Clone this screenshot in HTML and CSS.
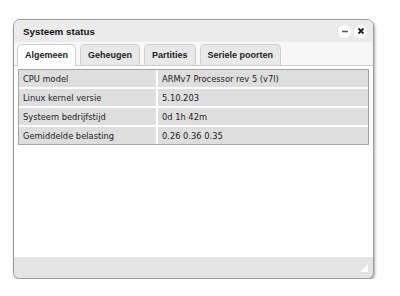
FILE: index.html
```html
<!DOCTYPE html>
<html lang="nl">

<head>
    <meta charset="UTF-8">
    <title>Systeem status</title>
    <link rel="stylesheet" href="styles.css">
</head>

<body>
    <div class="window">
        <div class="titlebar">
            <span class="title">Systeem status</span>
            <div class="win-buttons">
                <span class="win-btn">
                    <svg width="12" height="12" viewBox="0 0 12 12"><path d="M3 6.5h6" stroke="#555" stroke-width="1.6"/></svg>
                </span>
                <span class="win-btn">
                    <svg width="12" height="12" viewBox="0 0 12 12"><path d="M3.5 3.5l5 5M8.5 3.5l-5 5" stroke="#222" stroke-width="1.8"/></svg>
                </span>
            </div>
        </div>
        <div class="tabs">
            <span class="tab active">Algemeen</span>
            <span class="tab">Geheugen</span>
            <span class="tab">Partities</span>
            <span class="tab">Seriele poorten</span>
        </div>
        <div class="panel">
            <table class="info">
                <tr>
                    <td class="key">CPU model</td>
                    <td>ARMv7 Processor rev 5 (v7l)</td>
                </tr>
                <tr>
                    <td class="key">Linux kernel versie</td>
                    <td>5.10.203</td>
                </tr>
                <tr>
                    <td class="key">Systeem bedrijfstijd</td>
                    <td>0d 1h 42m</td>
                </tr>
                <tr>
                    <td class="key">Gemiddelde belasting</td>
                    <td>0.26 0.36 0.35</td>
                </tr>
            </table>
        </div>
        <div class="footer">
            <span class="grip"></span>
        </div>
    </div>
</body>

</html>
```

FILE: styles.css
```css
body {
    margin: 0;
    background-color: white;
    font-family: 'DejaVu Sans', Verdana, sans-serif;
    font-size: 8.3px;
    color: #222;
}

.window {
    margin: 19px 0 0 13px;
    width: 359px;
    height: 258px;
    border: 1px solid #9a9a9a;
    border-radius: 7px;
    box-shadow: 1px 2px 3px rgba(0, 0, 0, 0.35);
    display: flex;
    flex-direction: column;
    overflow: hidden;
    background-color: white;
}

.titlebar {
    height: 22px;
    background-color: #ebebeb;
    display: flex;
    align-items: center;
    justify-content: space-between;
    padding: 0 6px 0 9px;
}

.title {
    font-family: 'Liberation Sans', Arial, sans-serif;
    font-weight: bold;
    font-size: 9.8px;
    color: #111;
}

.win-buttons {
    display: flex;
    gap: 3px;
}

.win-btn {
    width: 13px;
    height: 13px;
    border-radius: 50%;
    background-color: white;
    display: flex;
    align-items: center;
    justify-content: center;
}

.tabs {
    display: flex;
    gap: 4px;
    padding: 2px 0 0 3px;
    background-color: #f7f7f7;
    border-bottom: 1px solid #cfcfcf;
}

.tab {
    font-family: 'Liberation Sans', Arial, sans-serif;
    font-size: 9px;
    padding: 0 7px;
    height: 20px;
    line-height: 20px;
    font-weight: bold;
    background-color: #e8e8e8;
    border: 1px solid #cfcfcf;
    border-bottom: none;
    border-radius: 5px 5px 0 0;
    margin-bottom: -1px;
}

.tab.active {
    background-color: white;
    height: 21px;
}

.panel {
    flex: 1;
    padding: 3px 4px 0 4px;
}

.info {
    width: 100%;
    border: 1px solid #a5a5a5;
    border-collapse: separate;
    border-spacing: 0;
    background-color: white;
}

.info td {
    background-color: #dedede;
    height: 17px;
    padding: 0 4px;
    border-bottom: 2px solid white;
    border-right: 2px solid white;
}

.info tr:last-child td {
    border-bottom: none;
}

.info td:last-child {
    border-right: none;
}

.info .key {
    width: 129px;
}

.footer {
    height: 21px;
    background-color: #e4e4e4;
    position: relative;
}

.grip {
    position: absolute;
    right: 5px;
    bottom: 6px;
    width: 0;
    height: 0;
    border-left: 8px solid transparent;
    border-bottom: 8px solid white;
}
```
